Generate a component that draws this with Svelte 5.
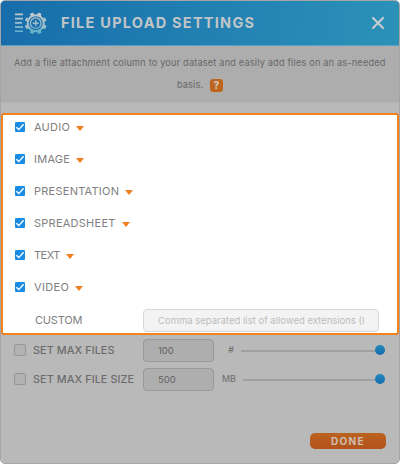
<script>
	let types = $state([
		{ name: "AUDIO", checked: true },
		{ name: "IMAGE", checked: true },
		{ name: "PRESENTATION", checked: true },
		{ name: "SPREADSHEET", checked: true },
		{ name: "TEXT", checked: true },
		{ name: "VIDEO", checked: true }
	]);

	let limits = $state([
		{ name: "SET MAX FILES", key: "files", value: "100", unit: "#", checked: false },
		{ name: "SET MAX FILE SIZE", key: "size", value: "500", unit: "MB", checked: false }
	]);

	let custom = $state("");
	const teeth = [0, 45, 90, 135, 180, 225, 270, 315];
</script>

<main class="dialog">
	<header class="header">
		<svg class="logo" width="33" height="24" viewBox="0 0 33 24">
			<defs>
				<linearGradient id="logoFill" gradientUnits="userSpaceOnUse" x1="0" y1="2" x2="0" y2="23">
					<stop offset="0" stop-color="#c4c7ca" />
					<stop offset="0.4" stop-color="#a9c0cb" />
					<stop offset="1" stop-color="#58b0c6" />
				</linearGradient>
			</defs>
			<g fill="url(#logoFill)">
				<path d="M1 2.6h8v1.7H1zM1 6.8h8v1.7H1zM1 11h7v1.7H1zM1 15.2h8v1.7H1zM1 19.4h8v1.7H1z" />
			</g>
			<g fill="none" stroke="url(#logoFill)">
				<circle cx="21.7" cy="12.2" r="8" stroke-width="2" />
				<circle cx="21.7" cy="12.2" r="5.3" stroke-width="1.2" />
			</g>
			<!-- teeth are rotated, so each takes a flat colour from its height on the gear -->
			{#each teeth as angle}
				{@const a = angle + 22.5}
				<path
					d="M19.6 5L20 1.2h3.4L23.8 5z"
					fill={a < 60 || a > 300 ? "#c2c7ca" : a < 120 || a > 240 ? "#a0bfcb" : "#68b3c7"}
					transform={`rotate(${a} 21.7 12.2)`}
				/>
			{/each}
			<path fill="#a3bfcb" d="M21 9.2h1.4v2.3h2.3v1.4h-2.3v2.3H21v-2.3h-2.3v-1.4H21z" />
		</svg>
		<h1 class="title">FILE UPLOAD SETTINGS</h1>
		<button class="close" aria-label="Close">
			<svg width="14" height="14" viewBox="0 0 14 14">
				<path d="M2 2L12 12M12 2L2 12" stroke="#c5cbce" stroke-width="2.2" stroke-linecap="round" />
			</svg>
		</button>
	</header>

	<div class="intro">
		<div class="intro-line">Add a file attachment column to your dataset and easily add files on an as-needed</div>
		<div class="intro-last"><span>basis.</span><span class="help">?</span></div>
	</div>

	<section class="types">
		{#each types as type}
			<div class="type-row">
				<button class="check" class:checked={type.checked} aria-label={type.name} onclick={() => (type.checked = !type.checked)}>
					{#if type.checked}
						<svg width="10" height="10" viewBox="0 0 10 10">
							<path d="M1.4 5.2L3.8 7.6L8.6 2.3" fill="none" stroke="#fff" stroke-width="1.4" />
						</svg>
					{/if}
				</button>
				<span class={`type-name ${type.name.toLowerCase()}`}>{type.name}</span>
				<span class="caret"></span>
			</div>
		{/each}
		<div class="custom-row">
			<span class="custom-name">CUSTOM</span>
			<input class="field custom-field" bind:value={custom} placeholder="Comma separated list of allowed extensions (I" />
		</div>
	</section>

	<section class="limits">
		{#each limits as limit}
			<div class="limit-row">
				<button class="box" class:on={limit.checked} aria-label={limit.name} onclick={() => (limit.checked = !limit.checked)}></button>
				<span class="limit-name">{limit.name}</span>
				<input class="field limit-field" bind:value={limit.value} />
				<span class={`unit unit-${limit.key}`}>{limit.unit}</span>
				<div class="slider"><span class="knob"></span></div>
			</div>
		{/each}
	</section>

	<footer class="footer">
		<button class="done">DONE</button>
	</footer>
</main>

<style>
	:global(body) {
		background: #fff;
	}
	* {
		box-sizing: border-box;
	}
	button {
		padding: 0;
		border: none;
		background: none;
		font-family: inherit;
	}
	.dialog {
		display: flex;
		flex-direction: column;
		width: 400px;
		height: 464px;
		background: #b9b9b9;
		border: 1px solid #a5a5a5;
		border-radius: 5px;
		overflow: hidden;
		font-family: Inter, "Open Sans", sans-serif;
		color: #777;
	}
	.header {
		display: flex;
		align-items: center;
		height: 45px;
		flex: none;
		padding: 0 14px 0 13px;
		background: linear-gradient(100deg, #176dab, #2c92b8);
		border-bottom: 1px solid #5c9fc4;
	}
	.title {
		flex: 1;
		margin: 0 0 0 14px;
		font-size: 14.5px;
		font-weight: 700;
		line-height: 20px;
		letter-spacing: 1.25px;
		white-space: nowrap;
		color: #c0c5c8;
	}
	.close {
		width: 14px;
		height: 14px;
		display: flex;
	}
	.intro {
		flex: none;
		height: 57px;
		padding-top: 6px;
		background: #adadad;
		border-bottom: 1px solid #b4b4b4;
		font-size: 9.2px;
		font-weight: 400;
		line-height: 22px;
		color: #686868;
	}
	.intro-line {
		margin-left: 13px;
		letter-spacing: 0.18px;
		white-space: nowrap;
	}
	.intro-last {
		display: flex;
		align-items: center;
		margin-left: 176px;
		letter-spacing: 0.12px;
	}
	.intro-last span:first-child {
		width: 26px;
	}
	.help {
		width: 13px;
		height: 13px;
		margin: 1px 0 0 7px;
		border-radius: 3px;
		background: #bd651c;
		color: #d0cac4;
		font-size: 10px;
		font-weight: 800;
		line-height: 13px;
		text-align: center;
		letter-spacing: 0;
	}
	.types {
		flex: none;
		height: 222px;
		margin-top: 10px;
		padding: 0 18px 0 12px;
		background: #fff;
		border: 2px solid #f5831f;
		border-radius: 3px;
	}
	.type-row {
		display: flex;
		align-items: center;
		height: 32px;
	}
	.type-row:first-child {
		height: 24px;
		margin-bottom: 4px;
	}
	.check {
		display: flex;
		width: 10px;
		height: 10px;
		border-radius: 1px;
		border: 1px solid #8a8a8a;
	}
	.checked {
		border: none;
		background: #1b8ce4;
	}
	.type-name {
		margin-left: 9px;
		font-size: 11px;
		line-height: 14px;
		letter-spacing: 0.25px;
		color: #808080;
	}
	.text {
		letter-spacing: -0.5px;
	}
	.video {
		letter-spacing: 0.35px;
	}
	.caret {
		margin: 2px 0 0 6px;
		border: 4.5px solid transparent;
		border-top: 5px solid #f0801f;
		border-bottom: none;
	}
	.custom-row {
		display: flex;
		align-items: center;
		height: 34px;
	}
	.custom-name {
		width: 108px;
		margin-left: 20px;
		font-size: 11px;
		letter-spacing: -0.2px;
		color: #808080;
	}
	.field {
		height: 23px;
		padding: 0 0 0 14px;
		border: 1px solid #999;
		border-radius: 4px;
		background: #aeaeae;
		font-family: inherit;
		font-size: 9.5px;
		color: #626262;
		outline: none;
	}
	.custom-field {
		width: 236px;
		flex: none;
		background: #f3f3f3;
		border-color: #d8d8d8;
	}
	.custom-field::placeholder {
		color: #bcbcbc;
		opacity: 1;
	}
	.limits {
		flex: none;
		padding: 1px 14px 0 13px;
	}
	.limit-row {
		display: flex;
		align-items: center;
		height: 29px;
	}
	.box {
		width: 12px;
		height: 12px;
		margin-top: -2px;
		border: 1px solid #969696;
		border-radius: 2px;
		background: #b2b2b2;
	}
	.on {
		background: #176dab;
	}
	.limit-name {
		width: 110px;
		margin: -1px 0 0 7px;
		font-size: 10.8px;
		font-weight: 500;
		letter-spacing: 0.1px;
		white-space: nowrap;
		color: #6c6c6c;
	}
	.limit-field {
		width: 71px;
	}
	.unit {
		width: 20px;
		margin: -2px 7px 0 0;
		text-align: right;
		font-size: 9px;
		font-weight: 400;
		color: #6c6c6c;
	}
	.unit-size {
		width: 22px;
	}
	.slider {
		flex: 1;
		display: flex;
		justify-content: flex-end;
		align-items: center;
		height: 2px;
		background: #a0a0a0;
	}
	.knob {
		width: 10px;
		height: 10px;
		margin-top: -1px;
		border-radius: 50%;
		background: linear-gradient(#2389be, #146cab);
	}
	.footer {
		display: flex;
		justify-content: flex-end;
		margin: auto 13px 14px 0;
	}
	.done {
		width: 76px;
		height: 16px;
		border-radius: 5px;
		background: linear-gradient(#bb6320, #b4521d);
		color: #cdbeb2;
		font-size: 10px;
		font-weight: 700;
		line-height: 16px;
		letter-spacing: 1.3px;
	}
</style>
